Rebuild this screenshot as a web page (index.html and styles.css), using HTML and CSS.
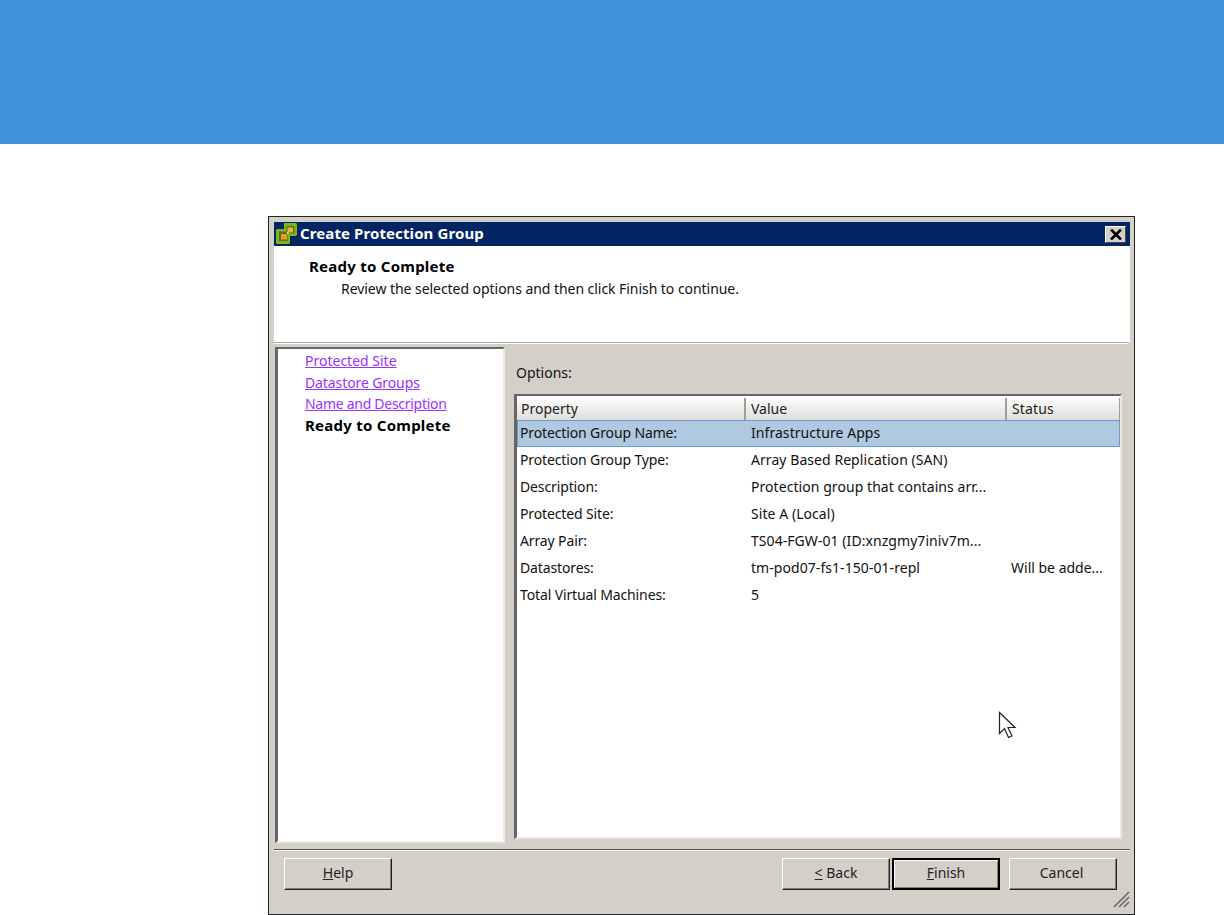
FILE: index.html
```html
<!DOCTYPE html>
<html lang="en">
<head>
<meta charset="utf-8">
<title>Create Protection Group</title>
<link rel="stylesheet" href="styles.css">
</head>
<body>
<header class="banner"></header>
<main class="stage">
  <section class="dialog">
    <div class="titlebar">
      <svg class="app-icon" width="24" height="24" viewBox="0 0 24 24">
        <path d="M10 1h12l1 1v11l-1 1h-6v7l-1 1H3l-1-1V8l1-1h7z" fill="#7fb51c"/>
        <path d="M12.500 4h8v7.500h-7V19h-8.500V9.500h7.500z" fill="#55731f"/>
        <path d="M13.500 5.500h5.500v5h-5.500z" fill="#f5b53a"/>
        <path d="M7 12h6v5.500H7z" fill="#f09a1e"/>
        <path d="M13 10h1.500v2H13z" fill="#fbe08a"/>
      </svg>
      <span class="title-text">Create Protection Group</span>
      <span class="close-btn">
        <svg width="12" height="11" viewBox="0 0 12 11"><path d="M1 0.500l10 10M11 0.500l-10 10" fill="none" stroke="#000" stroke-width="2.600"/></svg>
      </span>
    </div>
    <div class="intro">
      <h1 class="intro-title">Ready to Complete</h1>
      <p class="intro-text">Review the selected options and then click Finish to continue.</p>
    </div>
    <div class="rule-light"></div>
    <div class="content">
      <nav class="steps">
        <a class="step-link" href="#">Protected Site</a>
        <a class="step-link step-link-mid" href="#">Datastore Groups</a>
        <a class="step-link" href="#">Name and Description</a>
        <span class="step-current">Ready to Complete</span>
      </nav>
      <div class="options">
        <div class="options-label">Options:</div>
        <div class="grid-frame">
          <div class="grid-head">
            <div class="head-cell col-a">Property</div>
            <div class="head-cell col-b">Value</div>
            <div class="head-cell col-c">Status</div>
          </div>
          <div class="row row-selected"><span class="col-a">Protection Group Name:</span><span class="col-b">Infrastructure Apps</span><span class="col-c"></span></div>
          <div class="row"><span class="col-a">Protection Group Type:</span><span class="col-b">Array Based Replication (SAN)</span><span class="col-c"></span></div>
          <div class="row"><span class="col-a">Description:</span><span class="col-b">Protection group that contains arr...</span><span class="col-c"></span></div>
          <div class="row"><span class="col-a">Protected Site:</span><span class="col-b">Site A (Local)</span><span class="col-c"></span></div>
          <div class="row"><span class="col-a">Array Pair:</span><span class="col-b">TS04-FGW-01 (ID:xnzgmy7iniv7m...</span><span class="col-c"></span></div>
          <div class="row"><span class="col-a">Datastores:</span><span class="col-b">tm-pod07-fs1-150-01-repl</span><span class="col-c">Will be adde...</span></div>
          <div class="row"><span class="col-a">Total Virtual Machines:</span><span class="col-b">5</span><span class="col-c"></span></div>
        </div>
      </div>
    </div>
    <div class="rule-dark"></div>
    <footer class="footer">
      <button class="btn" type="button"><u>H</u>elp</button>
      <div class="footer-right">
        <div class="nav-btns">
          <button class="btn" type="button"><u>&lt;</u> Back</button>
          <button class="btn btn-default" type="button"><u>F</u>inish</button>
        </div>
        <button class="btn btn-cancel" type="button">Cancel</button>
      </div>
      <svg class="grip" width="17" height="17" viewBox="0 0 17 17"><path d="M1 16L16 1M6 16L16 6M11 16l5-5" stroke="#666" stroke-width="1.500" fill="none"/></svg>
    </footer>
    <svg class="pointer" width="20" height="30" viewBox="0 0 20 30"><path d="M1.500 1.500v21l5-5 4 9 3.500-1.500-4-8.500h7z" fill="#fff" stroke="#222" stroke-width="1.200"/></svg>
  </section>
</main>
</body>
</html>
```

FILE: styles.css
```css
* { box-sizing: border-box; }
html, body { margin: 0; padding: 0; background: #fff; }
body {
  width: 1224px;
  height: 915px;
  overflow: hidden;
  font-family: "Noto Sans", sans-serif;
  font-size: 14px;
  color: #111;
}
.banner { height: 144px; background: #4193d9; }
.stage { padding: 72px 89px 0 268px; }
.dialog {
  position: relative;
  width: 867px;
  height: 699px;
  background: #d4d0c8;
  border: 1px solid #222;
  padding: 5px 4px 0 5px;
  display: flex;
  flex-direction: column;
}
.titlebar {
  height: 24px;
  background: #032564;
  color: #fff;
  display: flex;
  align-items: center;
  font-weight: bold;
  padding-right: 4px;
  flex: none;
}
.app-icon { margin-right: 1px; flex: none; }
.title-text { flex: 1; font-size: 15px; letter-spacing: 0.100px; padding-bottom: 2px; padding-left: 1px; }
.close-btn {
  width: 21px;
  height: 17px;
  background: #d4d0c8;
  border: 1px solid;
  border-color: #fff #444 #444 #fff;
  display: flex;
  align-items: center;
  justify-content: center;
}
.intro { height: 96px; background: #fff; padding: 12px 0 0 35px; flex: none; }
.intro-title { margin: 0; font-size: 15px; font-weight: bold; letter-spacing: 0.250px; line-height: 16px; color: #000; }
.intro-text { margin: 7px 0 0 32px; line-height: 16px; letter-spacing: -0.050px; }
.rule-light { height: 2px; background: #a8a69f; border-bottom: 1px solid #fff; margin-right: 2px; flex: none; }
.content { display: flex; flex: 1; min-height: 0; padding-top: 3px; }
.steps {
  width: 230px;
  margin-left: 1px;
  height: 496px;
  background: #fff;
  border-style: solid;
  border-width: 2px;
  border-left-width: 3px;
  border-color: #666 #ece9e2 #ece9e2 #666;
  padding: 1px 0 0 27px;
  display: flex;
  flex-direction: column;
  flex: none;
}
.step-link { color: #9b30ff; line-height: 21.700px; letter-spacing: -0.280px; }
.step-link:first-child { letter-spacing: 0; }
.step-link-mid { letter-spacing: -0.100px; }
.step-current { font-size: 15px; font-weight: bold; letter-spacing: 0.250px; color: #000; line-height: 21.700px; }
.options { flex: 1; padding-left: 9px; display: flex; flex-direction: column; }
.options-label { height: 47px; padding: 18px 0 0 2px; line-height: 16px; }
.grid-frame {
  width: 608px;
  height: 445px;
  background: #fff;
  border-style: solid;
  border-width: 2px;
  border-left-width: 3px;
  border-color: #666 #ece9e2 #ece9e2 #666;
}
.grid-head { display: flex; height: 22px; margin-top: 2px; background: linear-gradient(#fbfbfa, #dfdedb); }
.head-cell {
  padding-left: 4px;
  line-height: 22px;
  border-right: 2px solid #9f9e9a;
  color: #222;
}
.col-a { width: 229px; flex: none; }
.col-b { width: 261px; flex: none; padding-left: 5px; }
.col-c { flex: 1; }
.head-cell.col-c { border-right: 1px solid #9f9e9a; padding-left: 5px; letter-spacing: 0.150px; }
.row { display: flex; height: 27px; line-height: 25px; padding-left: 3px; }
.row .col-a { width: 230px; letter-spacing: -0.130px; }
.row .col-b { width: 261px; padding-left: 1px; letter-spacing: 0.060px; }
.row-selected { background: #b0c8e0; border: 1px solid #6a9dcf; padding-left: 2px; line-height: 23px; }
.rule-dark { height: 2px; margin-top: 6px; background: #555; border-bottom: 1px solid #f4f2ec; flex: none; }
.footer { position: relative; height: 63px; display: flex; justify-content: space-between; padding: 7px 13px 0 10px; flex: none; }
.footer-right { display: flex; gap: 9px; }
.nav-btns { display: flex; gap: 2px; }
.btn {
  width: 108px;
  height: 32px;
  padding: 0 0 3px;
  background: #d4d0c8;
  font: inherit;
  color: #222;
  border: 1px solid;
  border-color: #fff #222 #222 #fff;
  box-shadow: inset -1px -1px 0 #808080;
}
.btn-default { border: 2px solid #000; box-shadow: inset 1px 1px 0 #fff, inset -1px -1px 0 #808080; }
.btn-cancel { padding-right: 3px; }
.grip { position: absolute; right: 0; bottom: 6px; }
.pointer { position: absolute; left: 729px; top: 494px; }
```
